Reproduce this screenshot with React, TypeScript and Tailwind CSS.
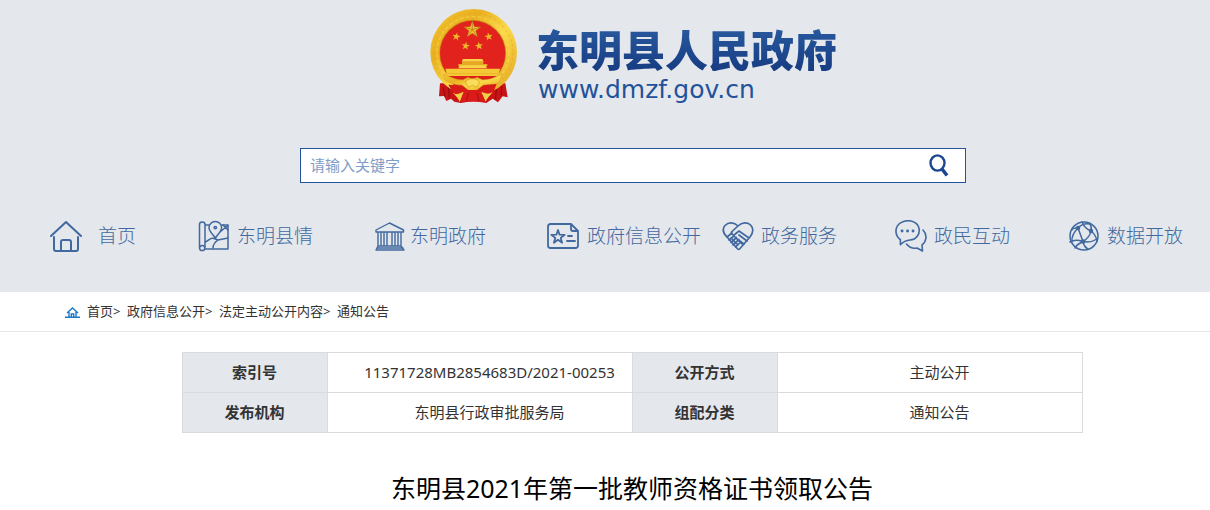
import type { ReactNode } from "react";

function starPath(cx: number, cy: number, r: number, turn = 0): string {
  const points = Array.from({ length: 10 }, (_, i) => {
    const angle = ((i * 36 - 90 + turn) * Math.PI) / 180;
    const radius = i % 2 === 0 ? r : r * 0.4;
    return `${(cx + radius * Math.cos(angle)).toFixed(1)} ${(cy + radius * Math.sin(angle)).toFixed(1)}`;
  });
  return `M${points.join("L")}Z`;
}

function Emblem() {
  return (
    <svg className="h-24 w-[89px] shrink-0" viewBox="33 24 267 288" role="img" aria-label="国徽">
      <defs>
        <linearGradient id="gold" x1="0" y1="0" x2="1" y2="1">
          <stop offset="0" stopColor="#f5c832" />
          <stop offset="0.3" stopColor="#e9b021" />
          <stop offset="0.55" stopColor="#fbd94a" />
          <stop offset="1" stopColor="#e2a31d" />
        </linearGradient>
      </defs>
      <path d="M66 250 L262 250 L269 292 L254 289 L240 307 L224 296 L205 309 L166 303 L128 309 L109 305 L99 296 L85 303 L78 288 L63 289Z" fill="#c91416" />
      <path d="M76 262 L81 290 M91 260 L94 296 M235 260 L233 299 M251 258 L250 286" stroke="#8f0c10" strokeWidth="3" />
      <circle cx="167" cy="157" r="130" fill="url(#gold)" />
      <circle cx="166" cy="158" r="119" fill="none" stroke="#d9a01c" strokeWidth="3" strokeDasharray="9 7" opacity="0.5" />
      <circle cx="165" cy="158" r="108" fill="none" stroke="#ffe058" strokeWidth="4" strokeDasharray="12 6" opacity="0.5" />
      <circle cx="164" cy="159" r="100" fill="#c88b18" />
      <circle cx="164" cy="160" r="98" fill="#e2231d" />
      <path d={starPath(163, 89, 26)} fill="#f1c22f" stroke="#b9801a" strokeWidth="1" />
      <path d="M163 66V89L185 82M163 89L176 107M163 89L150 107M163 89L141 82" stroke="#a8741a" strokeWidth="2" fill="none" />
      <path d={starPath(115, 110, 13, 10)} fill="#edb92b" />
      <path d={starPath(212, 110, 13, -10)} fill="#edb92b" />
      <path d={starPath(143, 138, 13, 8)} fill="#edb92b" />
      <path d={starPath(183, 138, 13, -8)} fill="#edb92b" />
      <path d="M135 177H193L197 185H131Z" fill="#f8d448" />
      <path d="M132 185H196V192H208V199H121V192H132Z" fill="#e6aa22" />
      <path d="M125 196H203L207 205H121Z" fill="#f8d448" />
      <path d="M82 206H247L239 229H89Z" fill="#f5c936" />
      <path d="M88 221H240" stroke="#e5ac24" strokeWidth="2" />
      <path d="M80 228H248L222 254L196 251H135L108 255Z" fill="#dc2019" />
      <path d="M76 222C99 230 111 240 135 239L150 232L163 238L177 232L193 239C216 240 231 231 252 222L244 246C226 256 211 253 198 253L182 265L163 273L145 265L130 253C111 254 96 251 80 239Z" fill="url(#gold)" stroke="#c58b1b" strokeWidth="1" />
      <path d="M143 248C145 232 182 232 184 248L176 262L163 256L151 262Z" fill="#f9dc59" stroke="#d19a20" strokeWidth="2" />
      <path d="M91 254L132 256L150 270L177 270L196 256L236 252L224 281L197 283L164 277L131 283L106 280Z" fill="#d81b19" />
      <path d="M104 278C119 286 124 279 137 276L125 306C121 295 114 287 104 278ZM224 276C209 285 203 279 190 276L203 305C207 294 215 288 224 276Z" fill="#f3ce48" />
      <path d="M135 282C146 272 181 272 192 282L199 305H128Z" fill="#da1b19" />
      <path d="M151 278L145 303M177 278L183 303" stroke="#aa1014" strokeWidth="3" />
    </svg>
  );
}

function Icon({ children, strokeWidth = 1.7 }: { children: ReactNode; strokeWidth?: number }) {
  return (
    <svg
      className="size-8 shrink-0"
      viewBox="0 0 32 32"
      fill="none"
      stroke="currentColor"
      strokeWidth={strokeWidth}
      strokeLinecap="round"
      strokeLinejoin="round"
      aria-hidden="true"
    >
      {children}
    </svg>
  );
}

const homeIcon = (
  <Icon strokeWidth={2}>
    <path d="M1 16L16 2L31 16M4 17V29Q4 31 6 31H26Q28 31 28 29V17M11 30V22Q11 20 13 20H19Q21 20 21 22V30" />
  </Icon>
);

const mapIcon = (
  <Icon strokeWidth={1.5}>
    <path d="M1.5 27V4.5Q1.5 2 4.2 2Q7 2 7 4.5V27M7 5H11M24 5H30V29H7" />
    <circle cx="4.2" cy="28" r="2.6" />
    <path d="M17.5 18C14 13.5 11 11 11 7.7A6.3 6.3 0 0 1 23.6 7.7C23.6 11 20.5 13.5 17.5 18ZM7 22C11 21 12 17 16 18.5L20 20L30 18M15 28C15 24 17 22 20 20M22 12L30 5.5M25 5L30 10" />
    <circle cx="17.3" cy="7.6" r="1.2" />
  </Icon>
);

const governmentIcon = (
  <Icon strokeWidth={1.4}>
    <path d="M2 10L15.5 3L29.5 10V12H2ZM4 12V26M7 12V26M10 12V26M13 12V26M18 12V26M21 12V26M24 12V26M27 12V26M4 26H27M3 28H29M2 30H30M4 26L2 30M27 26L30 30" />
  </Icon>
);

const documentIcon = (
  <Icon strokeWidth={1.8}>
    <path d="M24 4H3.5Q1 4 1 6.5V25.5Q1 28 3.5 28H28.5Q31 28 31 25.5V11L24 4V9Q24 11 26 11H31M21 16H25M20 21H28" />
    <path d={starPath(11, 17, 7)} />
  </Icon>
);

const handshakeIcon = (
  <Icon strokeWidth={1.7}>
    <path d="M5 17C1 13 0 9 3 5.5C6.5 2 12 2 16 6C20 2 26 2 29 5.5C32 9 31 13 28 17L18 28.5Q17 30 15.5 28.8L5 17ZM16 6L9.5 12Q9 15 12 15L17 11L27 18" />
    <path d="M5 17L10 13M7 20L12 16M9 22.5L14.5 17.5M11 25L17 19.5M13.5 27L19 21.5M9 18L16 25M12 16L20 24M17 15L25 21M15 19L22 24" />
  </Icon>
);

const chatIcon = (
  <Icon strokeWidth={1.6}>
    <path d="M5 19.5C-1 14 0 6 6 2.6C12-.9 21 .6 23.6 7C26 14 21 19.8 15 20C10 20.5 8 22 5.4 24.6V19.5" />
    <path d="M28 10C33 15 31 22 27 25L27.5 31L22 28C17 29 14 27 11.5 24" />
    <path d="M7 11H7.1M12.5 11H12.6M18 11H18.1" strokeWidth="2.8" />
  </Icon>
);

const networkIcon = (
  <Icon strokeWidth={1.5}>
    <circle cx="16" cy="16" r="14" />
    <path d="M10 8Q15 2.5 22 4M10 8Q3 15 4 22M10 8Q4 8 4 10M15 21.5Q7 19 2 22M15 21.5Q23 23 29 19M15 21.5Q8 25 7 28M15 21.5Q16 27 20 29M15 21.5Q22 17 23 11Q24 7 22 4M23 11Q28 15 29 21M15 21.5L10 8M23 11Q17 9 14 2" />
    <circle cx="10" cy="8" r="1.5" fill="currentColor" />
    <circle cx="23" cy="11" r="1.5" fill="currentColor" />
    <circle cx="15" cy="21.5" r="1.5" fill="currentColor" />
  </Icon>
);

const navItems = [
  { label: "首页", icon: homeIcon, gap: "gap-4" },
  { label: "东明县情", icon: mapIcon, gap: "gap-[7px]" },
  { label: "东明政府", icon: governmentIcon, gap: "gap-1" },
  { label: "政府信息公开", icon: documentIcon, gap: "gap-2" },
  { label: "政务服务", icon: handshakeIcon, gap: "gap-[7px]" },
  { label: "政民互动", icon: chatIcon, gap: "gap-[7px]" },
  { label: "数据开放", icon: networkIcon, gap: "gap-[7px]" },
];

const crumbs = ["首页", "政府信息公开", "法定主动公开内容", "通知公告"];

const records = [
  [
    { name: "索引号", value: "11371728MB2854683D/2021-00253" },
    { name: "公开方式", value: "主动公开" },
  ],
  [
    { name: "发布机构", value: "东明县行政审批服务局" },
    { name: "组配分类", value: "通知公告" },
  ],
];

export default function App() {
  return (
    <div className="bg-white font-['Noto_Sans','Noto_Sans_CJK_SC',sans-serif] text-[#333]">
      <header className="bg-[#e4e7ec] pb-10 pt-2">
        <div className="flex justify-center gap-[18px] pl-14">
          <Emblem />
          <div className="pt-[17px] text-[#22529a]">
            <h1 className="bg-linear-to-b from-[#2a5ba0] to-[#173c82] bg-clip-text font-['Noto_Sans_CJK_SC',sans-serif] text-[43px] font-black leading-[46px] text-transparent">
              东明县人民政府
            </h1>
            <p className="pl-0.5 pt-1 font-['DejaVu_Sans',sans-serif] text-[25px] leading-[30px]">www.dmzf.gov.cn</p>
          </div>
        </div>

        <div className="mt-[43px] flex justify-center pl-14">
          <form className="flex h-[35px] w-[666px] border border-[#22529a] bg-white" onSubmit={(e) => e.preventDefault()}>
            <input
              type="text"
              aria-label="请输入关键字"
              placeholder="请输入关键字"
              className="min-w-0 flex-1 px-[9px] text-[15px] outline-none placeholder:text-[#7f9dc6]"
            />
            <button type="submit" aria-label="搜索" className="flex w-[52px] items-center justify-center text-[#1c4790]">
              <svg className="size-6" viewBox="0 0 24 24" fill="none" stroke="currentColor" aria-hidden="true">
                <ellipse cx="10.5" cy="9" rx="7" ry="7.6" strokeWidth="2.4" />
                <path d="M15 15L20 21.5" strokeWidth="3.6" />
              </svg>
            </button>
          </form>
        </div>

        <nav className="mt-[37px] grid grid-cols-[148fr_176fr_173fr_175fr_173fr_173fr_142fr] pl-[50px]">
          {navItems.map((item) => (
            <a
              key={item.label}
              href="#"
              className={`flex items-center whitespace-nowrap text-[19px] font-light leading-8 text-[#41699f] ${item.gap}`}
            >
              {item.icon}
              {item.label}
            </a>
          ))}
        </nav>
      </header>

      <nav aria-label="当前位置" className="flex h-10 items-center border-b border-[#e6e6e6] pl-16 text-[13px]">
        <svg className="mr-[5px] h-4 w-[18px]" viewBox="0 0 18 16" fill="none" stroke="#1a78c8" strokeWidth="1.4" aria-hidden="true">
          <path d="M1 13.3H16M3 9L8.5 4L14 9M5 8V13M12 8V13M7.3 13V10H9.7V13" />
        </svg>
        <ol className="flex">
          {crumbs.map((crumb, i) => (
            <li key={crumb} className="flex">
              <a href="#">{crumb}</a>
              {i < crumbs.length - 1 && <span className="w-[14px]">&gt;</span>}
            </li>
          ))}
        </ol>
      </nav>

      <main className="flex flex-col items-center pb-1 pl-[54px] pt-5">
        <table className="w-[901px] table-fixed border-collapse text-[15px]">
          <colgroup>
            <col className="w-[145px]" />
            <col />
            <col className="w-[145px]" />
            <col />
          </colgroup>
          <tbody>
            {records.map((row) => (
              <tr key={row[0].name} className="h-10">
                {row.map((cell) => [
                  <th key={cell.name} scope="row" className="border border-[#d9dbde] bg-[#e4e7ec] font-bold">
                    {cell.name}
                  </th>,
                  <td key={cell.value} className="border border-[#d9dbde] pl-5 text-center">
                    {cell.value}
                  </td>,
                ])}
              </tr>
            ))}
          </tbody>
        </table>
        <h2 className="mt-[35px] text-[25px] leading-10 text-black">东明县2021年第一批教师资格证书领取公告</h2>
      </main>
    </div>
  );
}
